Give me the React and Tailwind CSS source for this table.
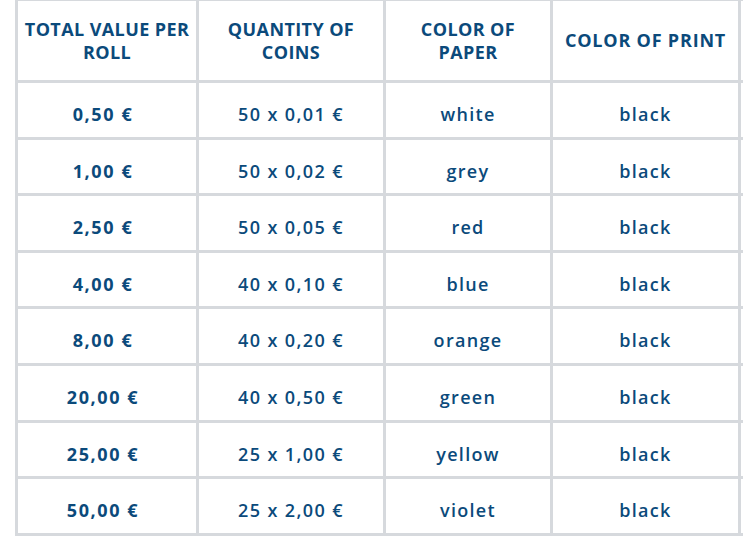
import React from "react";

const rows = [
  ["0,50 €", "50 x 0,01 €", "white", "black"],
  ["1,00 €", "50 x 0,02 €", "grey", "black"],
  ["2,50 €", "50 x 0,05 €", "red", "black"],
  ["4,00 €", "40 x 0,10 €", "blue", "black"],
  ["8,00 €", "40 x 0,20 €", "orange", "black"],
  ["20,00 €", "40 x 0,50 €", "green", "black"],
  ["25,00 €", "25 x 1,00 €", "yellow", "black"],
  ["50,00 €", "25 x 2,00 €", "violet", "black"],
];

const headers = [
  ["TOTAL VALUE PER ROLL", "px-[2px]"],
  ["QUANTITY OF COINS", "px-[2px]"],
  ["COLOR OF PAPER", "px-[16px]"],
  ["COLOR OF PRINT", "px-[2px] tracking-[0.8px]"],
];

export default function App() {
  return (
    <div className="w-[743px] h-[546px] overflow-hidden bg-white" style={{ fontFamily: '"Open Sans", sans-serif' }}>
      <div className="ml-[15px] w-[800px] grid grid-cols-[178px_184px_164px_185px_60px] grid-rows-[79px_54px_53px_54px_53px_54px_54px_53px_54px] gap-[3px] bg-[#d6d9dd] px-[3px] pt-[1px] pb-[3px] text-[#0b4a7b] text-[18px]">
        {headers.map(([h, cls]) => (
          <div key={h} className={`bg-white flex items-center justify-center text-center font-bold leading-[23px] tracking-[0.4px] ${cls}`}>
            {h}
          </div>
        ))}
        <div className="bg-white" />
        {rows.map((r, i) => (
          <React.Fragment key={i}>
            <div className="bg-white flex items-center justify-center font-bold tracking-[1.6px] pt-[9px] pr-[8px]">{r[0]}</div>
            <div className="bg-white flex items-center justify-center font-semibold tracking-[1.4px] pt-[9px]">{r[1]}</div>
            <div className="bg-white flex items-center justify-center font-semibold tracking-[1.3px] pt-[9px]">{r[2]}</div>
            <div className="bg-white flex items-center justify-center font-semibold tracking-[1.3px] pt-[9px]">{r[3]}</div>
            <div className="bg-white" />
          </React.Fragment>
        ))}
      </div>
    </div>
  );
}
